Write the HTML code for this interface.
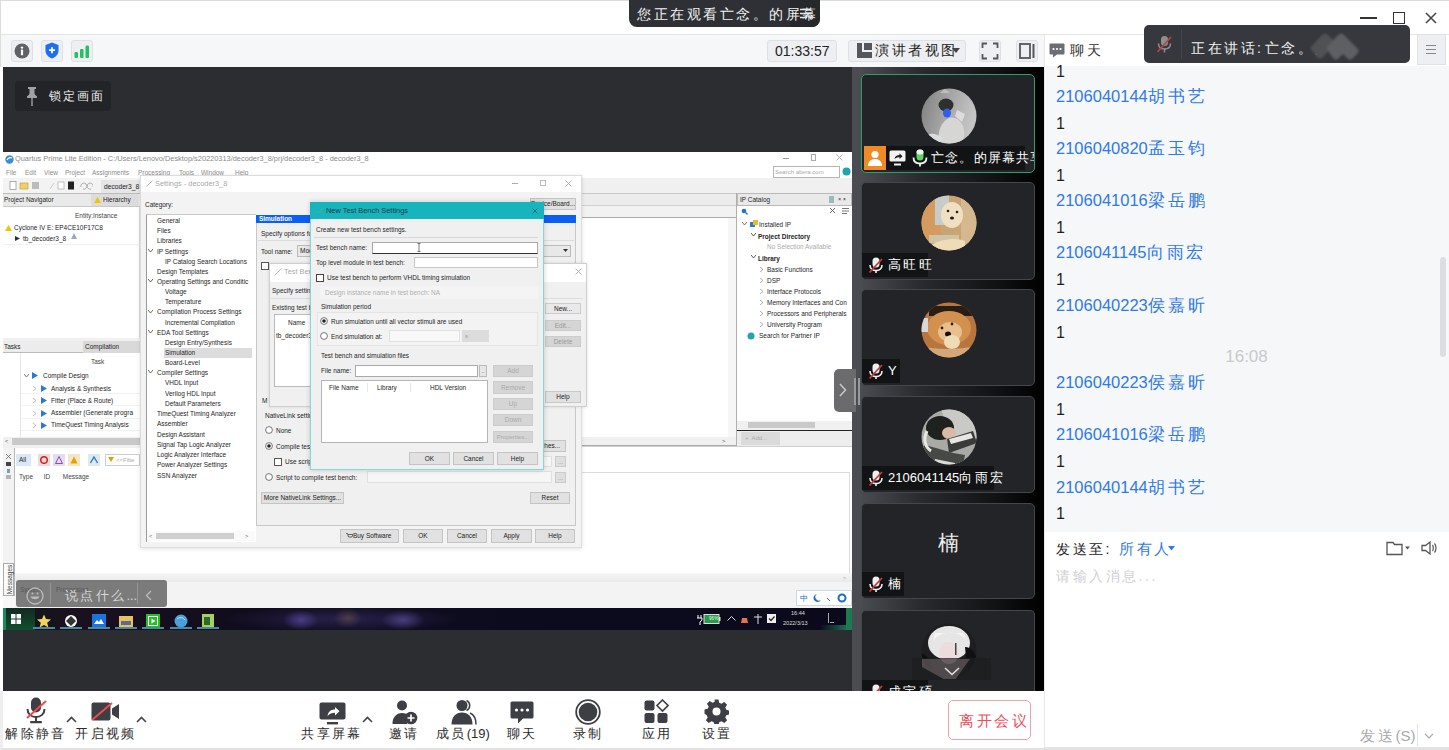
<!DOCTYPE html>
<html><head><meta charset="utf-8">
<style>
*{margin:0;padding:0;box-sizing:border-box}
html,body{width:1449px;height:750px;overflow:hidden;background:#fff;font-family:"Liberation Sans",sans-serif}
.a{position:absolute}
.cj{letter-spacing:.18em}
svg{display:block}
.qt{white-space:nowrap;font-family:"Liberation Sans",sans-serif}
#top{left:0;top:0;width:1449px;height:34px;background:#fff;border-top:1px solid #dcdcdc;border-left:1px solid #dcdcdc}
#tb{left:0;top:34px;width:1044px;height:33px;background:#f6f7f9;border-top:1px solid #e4e5e7;border-left:1px solid #dcdcdc}
#main{left:3px;top:67px;width:849px;height:624px;background:#2b2d31}
#strip{left:852px;top:67px;width:192px;height:624px;background:linear-gradient(90deg,#55565b 0,#4a4b50 5%,#2a2b2f 35%,#111214 75%,#000 100%)}
#bot{left:0;top:691px;width:1044px;height:59px;background:#fff;border-left:3px solid #eeeeee;border-bottom:2px solid #e2e2e2}
#chat{left:1044px;top:34px;width:405px;height:716px;background:#fff;border-top:1px solid #e4e5e7;border-left:1px solid #e8e8e8}
.ico{border:1px solid #dfe0e3;border-radius:3px;background:#eeeff2}
.card{left:861px;width:174px;background:#232427;border:1px solid #45464b;border-radius:5px;overflow:hidden}
.av{border-radius:50%;left:58px;top:12px;width:56px;height:56px}
.nm{left:0px;bottom:2px;height:24px;background:#121314;color:#fff;font-size:13px;line-height:24px;padding:0 6px 0 26px;white-space:nowrap}
.mic{left:6px;top:4px}
.msg{left:1056px;font-size:16px;color:#1f1f1f;white-space:nowrap}
.nmb{color:#2f7ae5}
.bt{font-size:13px;color:#2b2b2b;white-space:nowrap;text-align:center}
</style></head><body>
<!-- top bar -->
<div id="top" class="a"></div>
<div class="a" style="left:629px;top:0;width:191px;height:27px;background:#2e3035;border-radius:0 0 8px 8px"></div>
<div class="a" style="left:790px;top:0;width:30px;height:27px;background:#26282c;border-radius:0 0 8px 0"></div>
<div class="a cj" style="left:637px;top:6px;font-size:14px;line-height:16px;color:#f2f2f2;white-space:nowrap">您正在观看亡念。的屏幕</div>
<svg class="a" style="left:799px;top:8px" width="14" height="12" viewBox="0 0 14 12"><path d="M1 1.5h11M1 5.5h11M1 9.5h7" stroke="#e8e8e8" stroke-width="1.3"/><path d="M9.5 8.5h4l-2 3z" fill="#e8e8e8"/></svg>
<!-- window controls -->
<div class="a" style="left:1360px;top:17px;width:17px;height:2px;background:#333"></div>
<div class="a" style="left:1393px;top:12px;width:12px;height:12px;border:1.6px solid #333"></div>
<svg class="a" style="left:1425px;top:12px" width="12" height="12" viewBox="0 0 12 12"><path d="M1 1L11 11M11 1L1 11" stroke="#444" stroke-width="1.5"/></svg>

<!-- toolbar -->
<div id="tb" class="a"></div>
<div class="a ico" style="left:11px;top:40px;width:22px;height:22px"></div>
<svg class="a" style="left:14px;top:43px" width="16" height="16" viewBox="0 0 16 16"><circle cx="8" cy="8" r="7.5" fill="#5f6166"/><circle cx="8" cy="4.6" r="1.2" fill="#fff"/><rect x="6.9" y="6.6" width="2.2" height="5.6" fill="#fff"/></svg>
<div class="a ico" style="left:41px;top:40px;width:22px;height:22px"></div>
<svg class="a" style="left:45px;top:42px" width="14" height="17" viewBox="0 0 14 17"><path d="M7 0.5L13.5 3v5.5c0 4-3 6.8-6.5 8-3.5-1.2-6.5-4-6.5-8V3z" fill="#1d6ff2"/><path d="M7 5.2v6M4 8.2h6" stroke="#fff" stroke-width="1.8"/></svg>
<div class="a ico" style="left:71px;top:40px;width:22px;height:22px"></div>
<svg class="a" style="left:74px;top:45px" width="16" height="13" viewBox="0 0 16 13"><rect x="0.5" y="7" width="3.5" height="6" rx="1.2" fill="#23c163"/><rect x="6" y="4" width="3.5" height="9" rx="1.2" fill="#23c163"/><rect x="11.5" y="0.5" width="3.5" height="12.5" rx="1.2" fill="#23c163"/></svg>

<div class="a ico" style="left:767px;top:40px;width:70px;height:22px"></div>
<div class="a" style="left:775px;top:43px;font-size:14px;line-height:16px;color:#222">01:33:57</div>
<div class="a ico" style="left:848px;top:40px;width:118px;height:22px"></div>
<svg class="a" style="left:857px;top:43px" width="15" height="15" viewBox="0 0 15 15"><path d="M0 0h5v9h10v6H0z" fill="#55575c"/><rect x="7" y="0" width="8" height="7" fill="#55575c"/></svg>
<div class="a cj" style="left:875px;top:42px;font-size:14px;line-height:16px;color:#222;white-space:nowrap">演讲者视图</div>
<svg class="a" style="left:952px;top:48px" width="8" height="5" viewBox="0 0 8 5"><path d="M0 0h8L4 5z" fill="#444"/></svg>
<div class="a ico" style="left:979px;top:40px;width:22px;height:22px"></div>
<svg class="a" style="left:981px;top:42px" width="18" height="18" viewBox="0 0 18 18"><path d="M1.5 6V1.5H6M12 1.5h4.5V6M16.5 12v4.5H12M6 16.5H1.5V12" fill="none" stroke="#55575c" stroke-width="1.8"/></svg>
<div class="a ico" style="left:1016px;top:40px;width:22px;height:22px"></div>
<svg class="a" style="left:1019px;top:43px" width="17" height="16" viewBox="0 0 17 16"><rect x="1" y="1" width="10" height="14" fill="none" stroke="#55575c" stroke-width="1.8"/><rect x="13.5" y="1" width="2" height="14" fill="#55575c"/></svg>

<!-- main dark -->
<div id="main" class="a"></div>
<div class="a" style="left:15px;top:81px;width:96px;height:30px;background:#232428;border-radius:4px"></div>
<svg class="a" style="left:26px;top:87px" width="12" height="19" viewBox="0 0 12 19"><path d="M2 0h8v2H8.5v5L11 9.5V11H1V9.5L3.5 7V2H2z" fill="#a0a1a5"/><rect x="5.3" y="11" width="1.4" height="8" fill="#a0a1a5"/></svg>
<div class="a cj" style="left:49px;top:89px;font-size:12px;line-height:14px;color:#eee;white-space:nowrap">锁定画面</div>

<!-- SHARED SCREEN -->
<div class="a" style="left:3px;top:152px;width:849px;height:456px;background:#fff"></div>
<svg class="a" style="left:5px;top:155px" width="9" height="9" viewBox="0 0 9 9"><circle cx="4.5" cy="4.5" r="4.2" fill="#3a8fd0"/><path d="M2 5c1-2 3-3 5-2" stroke="#fff" stroke-width="1.2" fill="none"/></svg>
<div class="a qt" style="left:15px;top:154.3px;font-size:7.4px;line-height:10.4px;color:#8a8a8a;">Quartus Prime Lite Edition - C:/Users/Lenovo/Desktop/s20220313/decoder3_8/prj/decoder3_8 - decoder3_8</div>
<div class="a" style="left:783px;top:158px;width:6px;height:1px;background:#9a9a9a"></div>
<div class="a" style="left:811px;top:154px;width:5px;height:7px;border:1px solid #aaa"></div>
<svg class="a" style="left:836px;top:154px" width="7" height="7" viewBox="0 0 7 7"><path d="M0.5 0.5l6 6M6.5 0.5l-6 6" stroke="#aaa" stroke-width="0.9"/></svg>
<div class="a qt" style="left:6px;top:167.8px;font-size:6.48px;line-height:9.48px;color:#8c8c8c;">File</div>
<div class="a qt" style="left:25px;top:167.8px;font-size:6.48px;line-height:9.48px;color:#8c8c8c;">Edit</div>
<div class="a qt" style="left:44px;top:167.8px;font-size:6.48px;line-height:9.48px;color:#8c8c8c;">View</div>
<div class="a qt" style="left:65px;top:167.8px;font-size:6.48px;line-height:9.48px;color:#8c8c8c;">Project</div>
<div class="a qt" style="left:92px;top:167.8px;font-size:6.48px;line-height:9.48px;color:#8c8c8c;">Assignments</div>
<div class="a qt" style="left:138px;top:167.8px;font-size:6.48px;line-height:9.48px;color:#8c8c8c;">Processing</div>
<div class="a qt" style="left:179px;top:167.8px;font-size:6.48px;line-height:9.48px;color:#8c8c8c;">Tools</div>
<div class="a qt" style="left:201px;top:167.8px;font-size:6.48px;line-height:9.48px;color:#8c8c8c;">Window</div>
<div class="a qt" style="left:235px;top:167.8px;font-size:6.48px;line-height:9.48px;color:#8c8c8c;">Help</div>
<div class="a" style="left:773px;top:166px;width:67px;height:12px;background:#fff;border:1px solid #b5b5b5"></div>
<div class="a qt" style="left:775px;top:167.5px;font-size:6.01px;line-height:9.01px;color:#aaa;">Search altera.com</div>
<svg class="a" style="left:842px;top:167px" width="9" height="9" viewBox="0 0 9 9"><circle cx="4.5" cy="4.5" r="4" fill="#20a5b0"/></svg>
<div class="a" style="left:3px;top:178px;width:579px;height:15px;background:#f3f3f3"></div>
<div class="a" style="left:582px;top:178px;width:270px;height:15px;background:#f0f0f0"></div>
<svg class="a" style="left:8px;top:181px" width="85" height="10" viewBox="0 0 85 10"><rect x="2" y="0.5" width="6" height="8" fill="#fff" stroke="#999" stroke-width="0.8"/><rect x="12" y="2" width="8" height="6" fill="#f0d060" stroke="#b89a30" stroke-width="0.6"/><rect x="24" y="1" width="7" height="7" fill="#bbb"/><path d="M42 8l4-6" stroke="#ccc"/><rect x="50" y="1" width="6" height="7" fill="#fff" stroke="#aaa" stroke-width="0.7"/><rect x="60" y="0.5" width="6" height="8" fill="#222"/><path d="M73 6a3 3 0 1 1 2 2M85 6a3 3 0 1 0-2 2" stroke="#999" fill="none" stroke-width="0.8"/></svg>
<div class="a" style="left:101px;top:180px;width:39px;height:13px;background:#e6e6e6"></div>
<div class="a qt" style="left:104px;top:182.2px;font-size:6.66px;line-height:9.66px;color:#222;">decoder3_8</div>
<div class="a" style="left:3px;top:193px;width:137px;height:14px;background:#e9e9e9;border-top:1px solid #bdbdbd;border-bottom:1px solid #c8c8c8"></div>
<div class="a qt" style="left:4px;top:195.3px;font-size:6.48px;line-height:9.48px;color:#1e1e1e;">Project Navigator</div>
<div class="a" style="left:91px;top:194px;width:47px;height:12px;background:#dcdcdc"></div>
<svg class="a" style="left:94px;top:197px" width="7" height="6" viewBox="0 0 7 6"><path d="M3.5 0L7 6H0z" fill="#e8c800"/></svg>
<div class="a qt" style="left:103px;top:195.3px;font-size:6.48px;line-height:9.48px;color:#1e1e1e;">Hierarchy</div>
<div class="a" style="left:3px;top:207px;width:137px;height:131px;background:#fff;border-right:1px solid #ddd"></div>
<div class="a qt" style="left:75px;top:210.8px;font-size:6.48px;line-height:9.48px;color:#444;">Entity:Instance</div>
<svg class="a" style="left:5px;top:225px" width="7" height="6" viewBox="0 0 7 6"><path d="M3.5 0L7 6H0z" fill="#e8c800"/></svg>
<div class="a qt" style="left:14px;top:223.3px;font-size:6.48px;line-height:9.48px;color:#223;">Cyclone IV E: EP4CE10F17C8</div>
<svg class="a" style="left:15px;top:236px" width="5" height="5" viewBox="0 0 5 5"><path d="M0 0l5 2.5L0 5z" fill="#234"/></svg>
<div class="a qt" style="left:23px;top:234.3px;font-size:6.48px;line-height:9.48px;color:#1e1e1e;">tb_decoder3_8</div>
<svg class="a" style="left:71px;top:233px" width="6" height="6" viewBox="0 0 6 6"><path d="M3 0l3 6H0z" fill="#9ab" /></svg>
<div class="a" style="left:3px;top:244px;width:137px;height:1px;background:#f1f1f1"></div>
<div class="a" style="left:3px;top:338px;width:137px;height:3px;background:#f0f0f0"></div>
<div class="a" style="left:3px;top:341px;width:137px;height:12px;background:#ececec;border-bottom:1px solid #bbb"></div>
<div class="a qt" style="left:4px;top:342.3px;font-size:6.48px;line-height:9.48px;color:#1e1e1e;">Tasks</div>
<div class="a" style="left:83px;top:341px;width:57px;height:12px;background:#d9d9d9"></div>
<div class="a qt" style="left:85px;top:342.3px;font-size:6.48px;line-height:9.48px;color:#1e1e1e;">Compilation</div>
<div class="a" style="left:3px;top:353px;width:137px;height:85px;background:#fff"></div>
<div class="a" style="left:20px;top:353px;width:1px;height:85px;background:#e6e6e6"></div>
<div class="a qt" style="left:91px;top:357.3px;font-size:6.48px;line-height:9.48px;color:#444;">Task</div>
<svg class="a" style="left:24px;top:374px" width="5" height="4" viewBox="0 0 5 4"><path d="M0 0l2.5 3L5 0" stroke="#666" fill="none" stroke-width="0.9"/></svg>
<svg class="a" style="left:32px;top:372px" width="6" height="7" viewBox="0 0 6 7"><path d="M0 0l6 3.5L0 7z" fill="#2a7ad0"/></svg>
<div class="a qt" style="left:43px;top:371.3px;font-size:6.48px;line-height:9.48px;color:#1e1e1e;">Compile Design</div>
<svg class="a" style="left:33px;top:386.0px" width="3" height="5" viewBox="0 0 3 5"><path d="M0 0l3 2.5L0 5" stroke="#aaa" fill="none" stroke-width="0.8"/></svg>
<svg class="a" style="left:41px;top:385.0px" width="6" height="7" viewBox="0 0 6 7"><path d="M0 0l6 3.5L0 7z" fill="#2a7ad0"/></svg>
<div class="a qt" style="left:51px;top:383.8px;font-size:6.48px;line-height:9.48px;color:#1e1e1e;">Analysis &amp; Synthesis</div>
<div class="a" style="left:21px;top:393px;width:119px;height:1px;background:#f2f2f2"></div>
<svg class="a" style="left:33px;top:398.0px" width="3" height="5" viewBox="0 0 3 5"><path d="M0 0l3 2.5L0 5" stroke="#aaa" fill="none" stroke-width="0.8"/></svg>
<svg class="a" style="left:41px;top:397.0px" width="6" height="7" viewBox="0 0 6 7"><path d="M0 0l6 3.5L0 7z" fill="#2a7ad0"/></svg>
<div class="a qt" style="left:51px;top:395.8px;font-size:6.48px;line-height:9.48px;color:#1e1e1e;">Fitter (Place &amp; Route)</div>
<div class="a" style="left:21px;top:405px;width:119px;height:1px;background:#f2f2f2"></div>
<svg class="a" style="left:33px;top:410.5px" width="3" height="5" viewBox="0 0 3 5"><path d="M0 0l3 2.5L0 5" stroke="#aaa" fill="none" stroke-width="0.8"/></svg>
<svg class="a" style="left:41px;top:409.5px" width="6" height="7" viewBox="0 0 6 7"><path d="M0 0l6 3.5L0 7z" fill="#2a7ad0"/></svg>
<div class="a qt" style="left:51px;top:408.3px;font-size:6.48px;line-height:9.48px;color:#1e1e1e;">Assembler (Generate progra</div>
<div class="a" style="left:21px;top:418px;width:119px;height:1px;background:#f2f2f2"></div>
<svg class="a" style="left:33px;top:422.5px" width="3" height="5" viewBox="0 0 3 5"><path d="M0 0l3 2.5L0 5" stroke="#aaa" fill="none" stroke-width="0.8"/></svg>
<svg class="a" style="left:41px;top:421.5px" width="6" height="7" viewBox="0 0 6 7"><path d="M0 0l6 3.5L0 7z" fill="#2a7ad0"/></svg>
<div class="a qt" style="left:51px;top:420.3px;font-size:6.48px;line-height:9.48px;color:#1e1e1e;">TimeQuest Timing Analysis</div>
<div class="a" style="left:21px;top:430px;width:119px;height:1px;background:#f2f2f2"></div>
<div class="a" style="left:3px;top:437px;width:137px;height:9px;background:#f0f0f0"></div>
<div class="a" style="left:12px;top:438px;width:128px;height:7px;background:#c9c9c9"></div>
<div class="a qt" style="left:5px;top:437.2px;font-size:5.55px;line-height:8.55px;color:#555;">&lt;</div>
<div class="a" style="left:3px;top:446px;width:137px;height:2px;background:#f0f0f0"></div>
<div class="a" style="left:3px;top:448px;width:849px;height:130px;background:#fff"></div>
<div class="a" style="left:3px;top:448px;width:12px;height:148px;background:#f3f3f3;border-right:1px solid #b8b8b8"></div>
<svg class="a" style="left:4px;top:452px" width="9" height="28" viewBox="0 0 9 28"><path d="M2 2l5 5M7 2L2 7" stroke="#666" stroke-width="0.8"/><rect x="2" y="10" width="5" height="4" fill="#444"/><rect x="3" y="17" width="3" height="4" fill="#7a9ad0"/><path d="M2 24h5M2 26h5" stroke="#555" stroke-width="0.8"/></svg>
<div class="a" style="left:16px;top:454px;width:15px;height:12px;background:#d8e8f8"></div>
<div class="a qt" style="left:19px;top:455.3px;font-size:6.48px;line-height:9.48px;color:#1e1e1e;">All</div>
<div class="a" style="left:38px;top:454px;width:12px;height:12px;background:#f0d8d8"></div>
<svg class="a" style="left:40px;top:456px" width="8" height="8" viewBox="0 0 8 8"><circle cx="4" cy="4" r="3.3" fill="none" stroke="#d02020" stroke-width="1.5"/></svg>
<div class="a" style="left:53px;top:454px;width:12px;height:12px;background:#e6dcf0"></div>
<svg class="a" style="left:55px;top:456px" width="8" height="8" viewBox="0 0 8 8"><path d="M4 0.5L7.5 7.5H0.5z" fill="none" stroke="#8040b0" stroke-width="0.9"/></svg>
<div class="a" style="left:68px;top:454px;width:12px;height:12px;background:#f3e6c8"></div>
<svg class="a" style="left:70px;top:456px" width="8" height="8" viewBox="0 0 8 8"><path d="M4 0.5L7.5 7.5H0.5z" fill="#e8a000"/></svg>
<div class="a" style="left:88px;top:454px;width:12px;height:12px;background:#dfe8ee"></div>
<svg class="a" style="left:90px;top:456px" width="8" height="8" viewBox="0 0 8 8"><path d="M0.5 7L4 1l3.5 6" fill="none" stroke="#2080c0" stroke-width="1.3"/></svg>
<div class="a" style="left:105px;top:454px;width:35px;height:12px;background:#fff;border:1px solid #ccd"></div>
<svg class="a" style="left:108px;top:457px" width="6" height="5" viewBox="0 0 6 5"><path d="M0 0h6L3 5z" fill="#e0a000"/></svg>
<div class="a qt" style="left:116px;top:455.5px;font-size:6.01px;line-height:9.01px;color:#aaa;">&lt;&lt;Filte</div>
<div class="a qt" style="left:19px;top:472.3px;font-size:6.48px;line-height:9.48px;color:#444;">Type&nbsp;&nbsp;&nbsp;&nbsp;&nbsp; ID&nbsp;&nbsp;&nbsp;&nbsp;&nbsp;&nbsp; Message</div>
<div class="a" style="left:15px;top:573px;width:837px;height:9px;background:linear-gradient(#f6f6f6,#e9e9e9)"></div>
<div class="a" style="left:15px;top:582px;width:837px;height:26px;background:#f3f3f4"></div>
<div class="a" style="left:3px;top:596px;width:12px;height:12px;background:#f8f8f8"></div>
<div class="a" style="left:3px;top:563px;width:11px;height:33px;background:#fbfbfb;border:1px solid #aaa"></div>
<div class="a qt" style="left:-8px;top:575px;width:34px;height:9px;font-size:6.5px;line-height:9px;color:#444;text-align:center;transform:rotate(-90deg)">Messages</div>
<div class="a qt" style="left:20px;top:585.3px;font-size:6.48px;line-height:9.48px;color:#1e1e1e;">System</div>
<div class="a qt" style="left:56px;top:585.3px;font-size:6.48px;line-height:9.48px;color:#1e1e1e;">Processing</div>
<div class="a" style="left:796px;top:590px;width:56px;height:16px;background:#fff;border:1px solid #cfd8e0"></div>
<div class="a qt" style="left:800px;top:592.5px;font-size:8px;line-height:11px;color:#1b6fc0;letter-spacing:0">中</div>
<svg class="a" style="left:812px;top:593px" width="44" height="10" viewBox="0 0 44 10"><path d="M5 1a4 4 0 1 0 4 6 3 3 0 0 1-4-6z" fill="#1b6fc0"/><path d="M15 5l3 3" stroke="#1b6fc0" stroke-width="1"/><circle cx="30" cy="5" r="3.5" fill="none" stroke="#1b6fc0" stroke-width="2"/></svg>
<div class="a" style="left:582px;top:193px;width:155px;height:12px;background:#ececec;border-top:1px solid #c8c8c8"></div>
<div class="a" style="left:582px;top:205px;width:155px;height:13px;background:#f2f2f2;border-top:1px solid #cfcfcf;border-bottom:1px solid #aaa"></div>
<div class="a" style="left:582px;top:218px;width:154px;height:219px;background:#fff"></div>
<div class="a" style="left:728px;top:218px;width:8px;height:219px;background:#f6f6f6"></div>
<div class="a" style="left:582px;top:437px;width:154px;height:9px;background:#f0f0f0;border-bottom:1px solid #aaa"></div>
<div class="a qt" style="left:722px;top:436.7px;font-size:5.55px;line-height:8.55px;color:#555;">&gt;</div>
<div class="a" style="left:736px;top:193px;width:1px;height:253px;background:#b0b0b0"></div>
<div class="a" style="left:737px;top:193px;width:115px;height:13px;background:#e9e9e9;border:1px solid #b8b8b8"></div>
<div class="a qt" style="left:740px;top:194.8px;font-size:6.48px;line-height:9.48px;color:#1e1e1e;">IP Catalog</div>
<div class="a" style="left:829px;top:196px;width:5px;height:7px;background:#9bb"></div>
<div class="a qt" style="left:838px;top:195.2px;font-size:5.55px;line-height:8.55px;color:#333;">× ×</div>
<div class="a" style="left:737px;top:206px;width:115px;height:11px;background:#fff"></div>
<svg class="a" style="left:741px;top:208px" width="7" height="7" viewBox="0 0 7 7"><circle cx="3" cy="3" r="2.3" fill="#2070d0"/><path d="M4.5 4.5l2 2" stroke="#2070d0" stroke-width="1.2"/></svg>
<svg class="a" style="left:829px;top:207px" width="7" height="7" viewBox="0 0 7 7"><path d="M1 1l5 5M6 1L1 6" stroke="#666" stroke-width="1"/></svg>
<svg class="a" style="left:842px;top:207px" width="8" height="8" viewBox="0 0 8 8"><path d="M0 1.5h7M0 4h7M0 6.5h5" stroke="#555" stroke-width="0.8"/></svg>
<div class="a" style="left:737px;top:217px;width:115px;height:204px;background:#fff"></div>
<svg class="a" style="left:742px;top:222px" width="5" height="4" viewBox="0 0 5 4"><path d="M0 0l2.5 3L5 0" stroke="#666" fill="none" stroke-width="0.9"/></svg>
<svg class="a" style="left:750px;top:220px" width="8" height="8" viewBox="0 0 8 8"><rect x="0" y="2" width="5" height="5" fill="#2a7ad0"/><rect x="3" y="0" width="5" height="5" fill="#e0c030"/></svg>
<div class="a qt" style="left:759px;top:220.3px;font-size:6.48px;line-height:9.48px;color:#1e1e1e;">Installed IP</div>
<svg class="a" style="left:751px;top:233px" width="5" height="4" viewBox="0 0 5 4"><path d="M0 0l2.5 3L5 0" stroke="#444" fill="none" stroke-width="0.9"/></svg>
<div class="a qt" style="left:758px;top:231.8px;font-size:6.48px;line-height:9.48px;color:#222;"><b>Project Directory</b></div>
<div class="a qt" style="left:767px;top:242.3px;font-size:6.48px;line-height:9.48px;color:#aaa;">No Selection Available</div>
<svg class="a" style="left:751px;top:255px" width="5" height="4" viewBox="0 0 5 4"><path d="M0 0l2.5 3L5 0" stroke="#444" fill="none" stroke-width="0.9"/></svg>
<div class="a qt" style="left:758px;top:253.8px;font-size:6.48px;line-height:9.48px;color:#222;"><b>Library</b></div>
<svg class="a" style="left:760px;top:267.0px" width="3" height="5" viewBox="0 0 3 5"><path d="M0 0l3 2.5L0 5" stroke="#999" fill="none" stroke-width="0.8"/></svg>
<div class="a qt" style="left:767px;top:264.8px;font-size:6.48px;line-height:9.48px;color:#1e1e1e;">Basic Functions</div>
<svg class="a" style="left:760px;top:278.0px" width="3" height="5" viewBox="0 0 3 5"><path d="M0 0l3 2.5L0 5" stroke="#999" fill="none" stroke-width="0.8"/></svg>
<div class="a qt" style="left:767px;top:275.8px;font-size:6.48px;line-height:9.48px;color:#1e1e1e;">DSP</div>
<svg class="a" style="left:760px;top:289.0px" width="3" height="5" viewBox="0 0 3 5"><path d="M0 0l3 2.5L0 5" stroke="#999" fill="none" stroke-width="0.8"/></svg>
<div class="a qt" style="left:767px;top:286.8px;font-size:6.48px;line-height:9.48px;color:#1e1e1e;">Interface Protocols</div>
<svg class="a" style="left:760px;top:300.0px" width="3" height="5" viewBox="0 0 3 5"><path d="M0 0l3 2.5L0 5" stroke="#999" fill="none" stroke-width="0.8"/></svg>
<div class="a qt" style="left:767px;top:297.8px;font-size:6.48px;line-height:9.48px;color:#1e1e1e;">Memory Interfaces and Con</div>
<svg class="a" style="left:760px;top:311.0px" width="3" height="5" viewBox="0 0 3 5"><path d="M0 0l3 2.5L0 5" stroke="#999" fill="none" stroke-width="0.8"/></svg>
<div class="a qt" style="left:767px;top:308.8px;font-size:6.48px;line-height:9.48px;color:#1e1e1e;">Processors and Peripherals</div>
<svg class="a" style="left:760px;top:322.0px" width="3" height="5" viewBox="0 0 3 5"><path d="M0 0l3 2.5L0 5" stroke="#999" fill="none" stroke-width="0.8"/></svg>
<div class="a qt" style="left:767px;top:319.8px;font-size:6.48px;line-height:9.48px;color:#1e1e1e;">University Program</div>
<svg class="a" style="left:747px;top:332px" width="8" height="8" viewBox="0 0 8 8"><circle cx="4" cy="4" r="3.5" fill="#20a5b0"/></svg>
<div class="a qt" style="left:759px;top:331.3px;font-size:6.48px;line-height:9.48px;color:#1e1e1e;">Search for Partner IP</div>
<div class="a" style="left:737px;top:421px;width:115px;height:9px;background:#f0f0f0"></div>
<div class="a" style="left:748px;top:422px;width:67px;height:6px;background:#c9c9c9"></div>
<div class="a" style="left:737px;top:430px;width:115px;height:1px;background:#222"></div>
<div class="a" style="left:737px;top:431px;width:115px;height:15px;background:#ededed"></div>
<div class="a" style="left:741px;top:432px;width:39px;height:13px;background:#dadada"></div>
<div class="a qt" style="left:745px;top:434.0px;font-size:6.01px;line-height:9.01px;color:#aaa;">+&nbsp; Add...</div>
<div class="a" style="left:582px;top:446px;width:270px;height:1px;background:#d0d0d0"></div>
<div class="a" style="left:582px;top:472px;width:268px;height:1px;background:#dcdcdc"></div>
<div class="a" style="left:849px;top:472px;width:1px;height:101px;background:#dcdcdc"></div>
<div class="a qt" style="left:843px;top:573.7px;font-size:5.55px;line-height:8.55px;color:#aaa;">&gt;</div>
<div class="a" style="left:140px;top:175px;width:442px;height:373px;background:#f3f3f4;border:1px solid #dcdcdc;box-shadow:0 1px 4px rgba(0,0,0,.12)"></div>
<div class="a" style="left:141px;top:176px;width:440px;height:16px;background:#fff"></div>
<svg class="a" style="left:146px;top:180px" width="7" height="7" viewBox="0 0 7 7"><path d="M0.5 6.5l6-6" stroke="#bbb" stroke-width="1"/></svg>
<div class="a qt" style="left:155px;top:178.8px;font-size:7.4px;line-height:10.4px;color:#a8a8a8;">Settings - decoder3_8</div>
<div class="a" style="left:512px;top:183px;width:6px;height:1px;background:#aaa"></div>
<div class="a" style="left:540px;top:180px;width:6px;height:6px;border:1px solid #bbb"></div>
<svg class="a" style="left:565px;top:180px" width="7" height="7" viewBox="0 0 7 7"><path d="M0.5 0.5l6 6M6.5 0.5l-6 6" stroke="#aaa" stroke-width="0.9"/></svg>
<div class="a qt" style="left:145px;top:200.3px;font-size:6.48px;line-height:9.48px;color:#1e1e1e;">Category:</div>
<div class="a" style="left:146px;top:214px;width:110px;height:328px;background:#fff;border-left:1.5px solid #9a9a9a;border-top:1px solid #c8c8c8"></div>
<div class="a" style="left:164px;top:348px;width:88px;height:10px;background:#dcdcdc"></div>
<div class="a qt" style="left:157px;top:216.2px;font-size:6.48px;line-height:9.48px;color:#1e1e1e;">General</div>
<div class="a qt" style="left:157px;top:226.3px;font-size:6.48px;line-height:9.48px;color:#1e1e1e;">Files</div>
<div class="a qt" style="left:157px;top:236.3px;font-size:6.48px;line-height:9.48px;color:#1e1e1e;">Libraries</div>
<svg class="a" style="left:148px;top:248.9px" width="5" height="4" viewBox="0 0 5 4"><path d="M0 0l2.5 3L5 0" stroke="#555" fill="none" stroke-width="0.9"/></svg>
<div class="a qt" style="left:157px;top:246.7px;font-size:6.48px;line-height:9.48px;color:#1e1e1e;">IP Settings</div>
<div class="a qt" style="left:165px;top:256.7px;font-size:6.48px;line-height:9.48px;color:#1e1e1e;">IP Catalog Search Locations</div>
<div class="a qt" style="left:157px;top:266.8px;font-size:6.48px;line-height:9.48px;color:#1e1e1e;">Design Templates</div>
<svg class="a" style="left:148px;top:279.1px" width="5" height="4" viewBox="0 0 5 4"><path d="M0 0l2.5 3L5 0" stroke="#555" fill="none" stroke-width="0.9"/></svg>
<div class="a qt" style="left:157px;top:276.9px;font-size:6.48px;line-height:9.48px;color:#1e1e1e;">Operating Settings and Conditic</div>
<div class="a qt" style="left:165px;top:287.1px;font-size:6.48px;line-height:9.48px;color:#1e1e1e;">Voltage</div>
<div class="a qt" style="left:165px;top:297.3px;font-size:6.48px;line-height:9.48px;color:#1e1e1e;">Temperature</div>
<svg class="a" style="left:148px;top:309.5px" width="5" height="4" viewBox="0 0 5 4"><path d="M0 0l2.5 3L5 0" stroke="#555" fill="none" stroke-width="0.9"/></svg>
<div class="a qt" style="left:157px;top:307.3px;font-size:6.48px;line-height:9.48px;color:#1e1e1e;">Compilation Process Settings</div>
<div class="a qt" style="left:165px;top:317.7px;font-size:6.48px;line-height:9.48px;color:#1e1e1e;">Incremental Compilation</div>
<svg class="a" style="left:148px;top:330.1px" width="5" height="4" viewBox="0 0 5 4"><path d="M0 0l2.5 3L5 0" stroke="#555" fill="none" stroke-width="0.9"/></svg>
<div class="a qt" style="left:157px;top:327.9px;font-size:6.48px;line-height:9.48px;color:#1e1e1e;">EDA Tool Settings</div>
<div class="a qt" style="left:165px;top:337.9px;font-size:6.48px;line-height:9.48px;color:#1e1e1e;">Design Entry/Synthesis</div>
<div class="a qt" style="left:165px;top:347.9px;font-size:6.48px;line-height:9.48px;color:#1e1e1e;">Simulation</div>
<div class="a qt" style="left:165px;top:358.0px;font-size:6.48px;line-height:9.48px;color:#1e1e1e;">Board-Level</div>
<svg class="a" style="left:148px;top:370.3px" width="5" height="4" viewBox="0 0 5 4"><path d="M0 0l2.5 3L5 0" stroke="#555" fill="none" stroke-width="0.9"/></svg>
<div class="a qt" style="left:157px;top:368.1px;font-size:6.48px;line-height:9.48px;color:#1e1e1e;">Compiler Settings</div>
<div class="a qt" style="left:165px;top:378.3px;font-size:6.48px;line-height:9.48px;color:#1e1e1e;">VHDL Input</div>
<div class="a qt" style="left:165px;top:388.6px;font-size:6.48px;line-height:9.48px;color:#1e1e1e;">Verilog HDL Input</div>
<div class="a qt" style="left:165px;top:398.8px;font-size:6.48px;line-height:9.48px;color:#1e1e1e;">Default Parameters</div>
<div class="a qt" style="left:157px;top:409.1px;font-size:6.48px;line-height:9.48px;color:#1e1e1e;">TimeQuest Timing Analyzer</div>
<div class="a qt" style="left:157px;top:419.3px;font-size:6.48px;line-height:9.48px;color:#1e1e1e;">Assembler</div>
<div class="a qt" style="left:157px;top:429.6px;font-size:6.48px;line-height:9.48px;color:#1e1e1e;">Design Assistant</div>
<div class="a qt" style="left:157px;top:439.8px;font-size:6.48px;line-height:9.48px;color:#1e1e1e;">Signal Tap Logic Analyzer</div>
<div class="a qt" style="left:157px;top:450.0px;font-size:6.48px;line-height:9.48px;color:#1e1e1e;">Logic Analyzer Interface</div>
<div class="a qt" style="left:157px;top:460.3px;font-size:6.48px;line-height:9.48px;color:#1e1e1e;">Power Analyzer Settings</div>
<div class="a qt" style="left:157px;top:470.5px;font-size:6.48px;line-height:9.48px;color:#1e1e1e;">SSN Analyzer</div>
<div class="a" style="left:147px;top:531px;width:108px;height:10px;background:#fafafa"></div>
<div class="a" style="left:156px;top:533px;width:78px;height:6px;background:#cfcfcf"></div>
<div class="a qt" style="left:149px;top:531.7px;font-size:5.55px;line-height:8.55px;color:#666;">&lt;</div>
<div class="a qt" style="left:245px;top:531.7px;font-size:5.55px;line-height:8.55px;color:#666;">&gt;</div>
<div class="a" style="left:256px;top:215px;width:320px;height:8px;background:#0a5ff5"></div>
<div class="a qt" style="left:259px;top:214.3px;font-size:6.48px;line-height:9.48px;color:#fff;"><b>Simulation</b></div>
<div class="a" style="left:256px;top:223px;width:320px;height:303px;background:#f0f0f0;border:1px solid #c8c8c8;border-top:none"></div>
<div class="a qt" style="left:261px;top:228.8px;font-size:6.48px;line-height:9.48px;color:#1e1e1e;">Specify options for generating output files for use with other EDA tools.</div>
<div class="a" style="left:258px;top:240px;width:316px;height:1px;background:#dcdcdc"></div>
<div class="a qt" style="left:261px;top:246.8px;font-size:6.48px;line-height:9.48px;color:#1e1e1e;">Tool name:</div>
<div class="a" style="left:297px;top:245px;width:274px;height:12px;background:#e8e8e8;border:1px solid #bbb"></div>
<div class="a qt" style="left:300px;top:246.3px;font-size:6.48px;line-height:9.48px;color:#1e1e1e;">ModelSim-Altera</div>
<svg class="a" style="left:563px;top:249px" width="5" height="4" viewBox="0 0 5 4"><path d="M0 0h5L2.5 3z" fill="#333"/></svg>
<div class="a" style="left:261px;top:262px;width:8px;height:8px;background:#fff;border:1px solid #555"></div>
<div class="a qt" style="left:262px;top:396.3px;font-size:6.48px;line-height:9.48px;color:#1e1e1e;">M</div>
<div class="a qt" style="left:265px;top:411.0px;font-size:6.48px;line-height:9.48px;color:#1e1e1e;">NativeLink settings</div>
<svg class="a" style="left:265px;top:426px" width="8" height="8" viewBox="0 0 8 8"><circle cx="4" cy="4" r="3.4" fill="#fff" stroke="#555" stroke-width="0.8"/></svg>
<div class="a qt" style="left:276px;top:425.8px;font-size:6.48px;line-height:9.48px;color:#1e1e1e;">None</div>
<svg class="a" style="left:265px;top:442px" width="8" height="8" viewBox="0 0 8 8"><circle cx="4" cy="4" r="3.4" fill="#fff" stroke="#555" stroke-width="0.8"/><circle cx="4" cy="4" r="1.8" fill="#222"/></svg>
<div class="a qt" style="left:276px;top:441.8px;font-size:6.48px;line-height:9.48px;color:#1e1e1e;">Compile test bench:</div>
<div class="a" style="left:510px;top:440px;width:56px;height:12px;background:#e1e1e1;border:1px solid #c4c4c4"></div>
<div class="a qt" style="left:510px;width:56px;text-align:center;top:441.3px;font-size:6.48px;line-height:9.48px;color:#222;">Test Benches...</div>
<div class="a" style="left:274px;top:458px;width:8px;height:8px;background:#fff;border:1px solid #555"></div>
<div class="a qt" style="left:285px;top:457.3px;font-size:6.48px;line-height:9.48px;color:#1e1e1e;">Use script to set up simulation:</div>
<div class="a" style="left:367px;top:456px;width:185px;height:11px;background:#f6f6f6;border:1px solid #e0e0e0"></div>
<div class="a" style="left:555px;top:456px;width:11px;height:11px;background:#dedede;border:1px solid #ccc"></div>
<div class="a qt" style="left:555px;width:11px;text-align:center;top:456.8px;font-size:6.48px;line-height:9.48px;color:#999;">...</div>
<svg class="a" style="left:265px;top:473px" width="8" height="8" viewBox="0 0 8 8"><circle cx="4" cy="4" r="3.4" fill="#fff" stroke="#555" stroke-width="0.8"/></svg>
<div class="a qt" style="left:276px;top:472.8px;font-size:6.48px;line-height:9.48px;color:#1e1e1e;">Script to compile test bench:</div>
<div class="a" style="left:367px;top:471px;width:185px;height:12px;background:#f6f6f6;border:1px solid #e0e0e0"></div>
<div class="a" style="left:555px;top:472px;width:11px;height:11px;background:#dedede;border:1px solid #ccc"></div>
<div class="a qt" style="left:555px;width:11px;text-align:center;top:472.8px;font-size:6.48px;line-height:9.48px;color:#999;">...</div>
<div class="a" style="left:261px;top:492px;width:83px;height:12px;background:#e1e1e1;border:1px solid #c4c4c4"></div>
<div class="a qt" style="left:261px;width:83px;text-align:center;top:493.3px;font-size:6.48px;line-height:9.48px;color:#222;">More NativeLink Settings...</div>
<div class="a" style="left:530px;top:492px;width:40px;height:12px;background:#e1e1e1;border:1px solid #c4c4c4"></div>
<div class="a qt" style="left:530px;width:40px;text-align:center;top:493.3px;font-size:6.48px;line-height:9.48px;color:#222;">Reset</div>
<div class="a" style="left:340px;top:529px;width:59px;height:14px;background:#e1e1e1;border:1px solid #c4c4c4"></div>
<div class="a qt" style="left:340px;width:59px;text-align:center;top:531.3px;font-size:6.48px;line-height:9.48px;color:#222;">&nbsp;&nbsp; Buy Software</div>
<svg class="a" style="left:346px;top:533px" width="7" height="6" viewBox="0 0 7 6"><path d="M0 0.5h1.5l1 3.5h3.5l1-2.5H2" stroke="#444" fill="none" stroke-width="0.8"/></svg>
<div class="a" style="left:403px;top:529px;width:40px;height:14px;background:#e1e1e1;border:1px solid #c4c4c4"></div>
<div class="a qt" style="left:403px;width:40px;text-align:center;top:531.3px;font-size:6.48px;line-height:9.48px;color:#222;">OK</div>
<div class="a" style="left:447px;top:529px;width:40px;height:14px;background:#e1e1e1;border:1px solid #c4c4c4"></div>
<div class="a qt" style="left:447px;width:40px;text-align:center;top:531.3px;font-size:6.48px;line-height:9.48px;color:#222;">Cancel</div>
<div class="a" style="left:491px;top:529px;width:41px;height:14px;background:#e1e1e1;border:1px solid #c4c4c4"></div>
<div class="a qt" style="left:491px;width:41px;text-align:center;top:531.3px;font-size:6.48px;line-height:9.48px;color:#222;">Apply</div>
<div class="a" style="left:535px;top:529px;width:40px;height:14px;background:#e1e1e1;border:1px solid #c4c4c4"></div>
<div class="a qt" style="left:535px;width:40px;text-align:center;top:531.3px;font-size:6.48px;line-height:9.48px;color:#222;">Help</div>
<div class="a" style="left:530px;top:198px;width:46px;height:12px;background:#e1e1e1;border:1px solid #c4c4c4"></div>
<div class="a qt" style="left:530px;width:46px;text-align:center;top:199.3px;font-size:6.48px;line-height:9.48px;color:#222;">Device/Board...</div>
<div class="a" style="left:269px;top:263px;width:318px;height:144px;background:#f0f0f0;border:1px solid #cfcfcf;box-shadow:0 0 3px rgba(0,0,0,.12)"></div>
<div class="a" style="left:270px;top:264px;width:316px;height:18px;background:#fff"></div>
<svg class="a" style="left:274px;top:268px" width="8" height="8" viewBox="0 0 8 8"><path d="M0.5 7.5l7-7" stroke="#bbb" stroke-width="1"/></svg>
<div class="a qt" style="left:284px;top:267.3px;font-size:7.4px;line-height:10.4px;color:#aaa;">Test Bench</div>
<svg class="a" style="left:575px;top:268px" width="7" height="7" viewBox="0 0 7 7"><path d="M0.5 0.5l6 6M6.5 0.5l-6 6" stroke="#aaa" stroke-width="0.9"/></svg>
<div class="a qt" style="left:272px;top:285.8px;font-size:6.48px;line-height:9.48px;color:#1e1e1e;">Specify settings for each test bench.</div>
<div class="a" style="left:271px;top:298px;width:312px;height:1px;background:#dcdcdc"></div>
<div class="a qt" style="left:272px;top:302.8px;font-size:6.48px;line-height:9.48px;color:#1e1e1e;">Existing test bench settings:</div>
<div class="a" style="left:274px;top:314px;width:268px;height:73px;background:#fff;border:1px solid #bbb"></div>
<div class="a qt" style="left:288px;top:317.8px;font-size:6.48px;line-height:9.48px;color:#1e1e1e;">Name</div>
<div class="a qt" style="left:276px;top:330.8px;font-size:6.48px;line-height:9.48px;color:#1e1e1e;">tb_decoder3_8</div>
<div class="a" style="left:545px;top:303px;width:36px;height:11px;background:#e9e9e9;border:1px solid #ccc"></div>
<div class="a qt" style="left:545px;width:36px;text-align:center;top:303.8px;font-size:6.48px;line-height:9.48px;color:#222;">New...</div>
<div class="a" style="left:545px;top:320px;width:36px;height:11px;background:#d5d5d5;border:1px solid #ccc"></div>
<div class="a qt" style="left:545px;width:36px;text-align:center;top:320.8px;font-size:6.48px;line-height:9.48px;color:#999;">Edit...</div>
<div class="a" style="left:545px;top:336px;width:36px;height:11px;background:#d5d5d5;border:1px solid #ccc"></div>
<div class="a qt" style="left:545px;width:36px;text-align:center;top:336.8px;font-size:6.48px;line-height:9.48px;color:#999;">Delete</div>
<div class="a" style="left:545px;top:391px;width:36px;height:12px;background:#e1e1e1;border:1px solid #c8c8c8"></div>
<div class="a qt" style="left:545px;width:36px;text-align:center;top:392.3px;font-size:6.48px;line-height:9.48px;color:#222;">Help</div>
<div class="a" style="left:310px;top:202px;width:234px;height:268px;background:#f0f0f0;border:1px solid #7fd8de;box-shadow:0 0 5px rgba(0,0,0,.18)"></div>
<div class="a" style="left:310px;top:202px;width:234px;height:17px;background:#17b4bd"></div>
<svg class="a" style="left:317px;top:208px" width="6" height="6" viewBox="0 0 6 6"><path d="M0.5 3l2 2 3-4.5" stroke="#6a6" fill="none" stroke-width="1"/></svg>
<div class="a qt" style="left:326px;top:205.6px;font-size:7.4px;line-height:10.4px;color:#1d3a40;">New Test Bench Settings</div>
<svg class="a" style="left:532px;top:208px" width="6" height="6" viewBox="0 0 6 6"><path d="M0.5 0.5l5 5M5.5 0.5l-5 5" stroke="#1a6d72" stroke-width="0.9"/></svg>
<div class="a qt" style="left:316px;top:225.1px;font-size:6.48px;line-height:9.48px;color:#1e1e1e;">Create new test bench settings.</div>
<div class="a" style="left:314px;top:237px;width:224px;height:1px;background:#d8d8d8"></div>
<div class="a qt" style="left:316px;top:243.3px;font-size:6.48px;line-height:9.48px;color:#1e1e1e;">Test bench name:</div>
<div class="a" style="left:372px;top:242px;width:166px;height:12px;background:#fff;border:1px solid #aaa;border-bottom:1.5px solid #333"></div>
<svg class="a" style="left:417px;top:243px" width="4" height="9" viewBox="0 0 4 9"><path d="M2 0.5v8M0.5 0.5h3M0.5 8.5h3" stroke="#444" stroke-width="0.7"/></svg>
<div class="a qt" style="left:316px;top:258.3px;font-size:6.48px;line-height:9.48px;color:#1e1e1e;">Top level module in test bench:</div>
<div class="a" style="left:414px;top:257px;width:124px;height:11px;background:#fff;border:1px solid #c8c8c8"></div>
<div class="a" style="left:316px;top:274px;width:8px;height:8px;background:#fff;border:1px solid #444"></div>
<div class="a qt" style="left:327px;top:273.3px;font-size:6.48px;line-height:9.48px;color:#1e1e1e;">Use test bench to perform VHDL timing simulation</div>
<div class="a" style="left:320px;top:286px;width:218px;height:13px;background:#f4f4f4"></div>
<div class="a qt" style="left:325px;top:287.8px;font-size:6.48px;line-height:9.48px;color:#b0b0b0;">Design instance name in test bench: NA</div>
<div class="a qt" style="left:321px;top:301.6px;font-size:6.48px;line-height:9.48px;color:#1e1e1e;">Simulation period</div>
<div class="a" style="left:317px;top:312px;width:221px;height:34px;background:#f3f3f3;border:1px solid #e4e4e4"></div>
<svg class="a" style="left:320px;top:317px" width="8" height="8" viewBox="0 0 8 8"><circle cx="4" cy="4" r="3.4" fill="#fff" stroke="#555" stroke-width="0.8"/><circle cx="4" cy="4" r="1.8" fill="#222"/></svg>
<div class="a qt" style="left:331px;top:316.6px;font-size:6.48px;line-height:9.48px;color:#1e1e1e;">Run simulation until all vector stimuli are used</div>
<svg class="a" style="left:320px;top:332px" width="8" height="8" viewBox="0 0 8 8"><circle cx="4" cy="4" r="3.4" fill="#fff" stroke="#555" stroke-width="0.8"/></svg>
<div class="a qt" style="left:331px;top:331.6px;font-size:6.48px;line-height:9.48px;color:#1e1e1e;">End simulation at:</div>
<div class="a" style="left:389px;top:330px;width:71px;height:12px;background:#f8f8f8;border:1px solid #e2e2e2"></div>
<div class="a" style="left:462px;top:330px;width:27px;height:12px;background:#dcdcdc"></div>
<div class="a qt" style="left:465px;top:331.5px;font-size:6.01px;line-height:9.01px;color:#999;">s</div>
<div class="a qt" style="left:321px;top:350.6px;font-size:6.48px;line-height:9.48px;color:#1e1e1e;">Test bench and simulation files</div>
<div class="a qt" style="left:321px;top:366.1px;font-size:6.48px;line-height:9.48px;color:#1e1e1e;">File name:</div>
<div class="a" style="left:355px;top:365px;width:123px;height:12px;background:#fff;border:1px solid #aaa"></div>
<div class="a" style="left:479px;top:365px;width:8px;height:12px;background:#e6e6e6;border:1px solid #bbb"></div>
<div class="a qt" style="left:479px;width:8px;text-align:center;top:366.7px;font-size:5.55px;line-height:8.55px;color:#555;">..</div>
<div class="a" style="left:493px;top:365px;width:40px;height:12px;background:#d5d5d5;border:1px solid #ccc"></div>
<div class="a qt" style="left:493px;width:40px;text-align:center;top:366.3px;font-size:6.48px;line-height:9.48px;color:#aaa;">Add</div>
<div class="a" style="left:321px;top:380px;width:167px;height:63px;background:#fff;border:1px solid #b5b5b5"></div>
<div class="a qt" style="left:329px;top:382.9px;font-size:6.48px;line-height:9.48px;color:#1e1e1e;">File Name</div>
<div class="a qt" style="left:377px;top:382.9px;font-size:6.48px;line-height:9.48px;color:#1e1e1e;">Library</div>
<div class="a qt" style="left:430px;top:382.9px;font-size:6.48px;line-height:9.48px;color:#1e1e1e;">HDL Version</div>
<div class="a" style="left:367px;top:383px;width:1px;height:9px;background:#e6e6e6"></div>
<div class="a" style="left:410px;top:383px;width:1px;height:9px;background:#e6e6e6"></div>
<div class="a" style="left:493px;top:381px;width:40px;height:13px;background:#d5d5d5;border:1px solid #ccc"></div>
<div class="a qt" style="left:493px;width:40px;text-align:center;top:382.8px;font-size:6.48px;line-height:9.48px;color:#aaa;">Remove</div>
<div class="a" style="left:493px;top:398px;width:40px;height:12px;background:#d5d5d5;border:1px solid #ccc"></div>
<div class="a qt" style="left:493px;width:40px;text-align:center;top:399.3px;font-size:6.48px;line-height:9.48px;color:#aaa;">Up</div>
<div class="a" style="left:493px;top:414px;width:40px;height:12px;background:#d5d5d5;border:1px solid #ccc"></div>
<div class="a qt" style="left:493px;width:40px;text-align:center;top:415.3px;font-size:6.48px;line-height:9.48px;color:#aaa;">Down</div>
<div class="a" style="left:493px;top:431px;width:40px;height:12px;background:#d5d5d5;border:1px solid #ccc"></div>
<div class="a qt" style="left:493px;width:40px;text-align:center;top:432.5px;font-size:6.01px;line-height:9.01px;color:#aaa;">Properties...</div>
<div class="a" style="left:409px;top:452px;width:41px;height:13px;background:#e1e1e1;border:1px solid #c4c4c4"></div>
<div class="a qt" style="left:409px;width:41px;text-align:center;top:453.8px;font-size:6.48px;line-height:9.48px;color:#222;">OK</div>
<div class="a" style="left:453px;top:452px;width:41px;height:13px;background:#e1e1e1;border:1px solid #c4c4c4"></div>
<div class="a qt" style="left:453px;width:41px;text-align:center;top:453.8px;font-size:6.48px;line-height:9.48px;color:#222;">Cancel</div>
<div class="a" style="left:497px;top:452px;width:41px;height:13px;background:#e1e1e1;border:1px solid #c4c4c4"></div>
<div class="a qt" style="left:497px;width:41px;text-align:center;top:453.8px;font-size:6.48px;line-height:9.48px;color:#222;">Help</div>
<div class="a" style="left:3px;top:608px;width:849px;height:22px;background:radial-gradient(ellipse 18px 10px at 298px 12px,rgba(110,90,200,.55),transparent),radial-gradient(ellipse 22px 10px at 400px 12px,rgba(120,100,200,.5),transparent),radial-gradient(ellipse 14px 10px at 345px 10px,rgba(150,110,80,.35),transparent),radial-gradient(ellipse 120px 14px at 340px 11px,rgba(60,50,110,.55),transparent),linear-gradient(90deg,#0e1a16 0,#1a1020 8%,#100c1c 30%,#0c0b1e 60%,#0a0a1c 100%)"></div>
<div class="a" style="left:3px;top:608px;width:32px;height:22px;background:linear-gradient(180deg,#122a22,#10502f)"></div>
<div class="a" style="left:3px;top:608px;width:3px;height:22px;background:#1c8a5a"></div>
<svg class="a" style="left:11px;top:614px" width="10" height="10" viewBox="0 0 10 10"><rect x="0" y="0" width="4.5" height="4.5" fill="#fff"/><rect x="5.5" y="0" width="4.5" height="4.5" fill="#fff"/><rect x="0" y="5.5" width="4.5" height="4.5" fill="#fff"/><rect x="5.5" y="5.5" width="4.5" height="4.5" fill="#fff"/></svg>
<svg class="a" style="left:37px;top:614px" width="14" height="14" viewBox="0 0 14 14"><path d="M7 0.5l2 4.5 5 0.5-3.8 3.2 1.2 4.8L7 11l-4.4 2.5 1.2-4.8L0 5.5l5-0.5z" fill="#f2d45c"/></svg>
<div class="a" style="left:33px;top:627px;width:22px;height:1.5px;background:#4a8aa0"></div>
<svg class="a" style="left:64px;top:614px" width="14" height="14" viewBox="0 0 14 14"><circle cx="7" cy="7" r="6" fill="#fff"/><path d="M7 2l5 5-5 5-5-5z" fill="#333"/></svg>
<div class="a" style="left:60px;top:627px;width:22px;height:1.5px;background:#4a8aa0"></div>
<svg class="a" style="left:92px;top:614px" width="14" height="14" viewBox="0 0 14 14"><rect x="0" y="0" width="14" height="14" fill="#1875e0"/><path d="M2 10l3-4 2 2 2-3 3 5z" fill="#fff"/></svg>
<div class="a" style="left:88px;top:627px;width:22px;height:1.5px;background:#4a8aa0"></div>
<svg class="a" style="left:119px;top:614px" width="14" height="14" viewBox="0 0 14 14"><rect x="0" y="2" width="14" height="11" fill="#e8c35a"/><rect x="2" y="7" width="10" height="4" fill="#5a6a9a"/></svg>
<div class="a" style="left:115px;top:627px;width:22px;height:1.5px;background:#4a8aa0"></div>
<svg class="a" style="left:146px;top:614px" width="14" height="14" viewBox="0 0 14 14"><rect x="0" y="0" width="14" height="14" fill="#22c022"/><rect x="2.5" y="2.5" width="9" height="9" fill="none" stroke="#fff" stroke-width="1"/><path d="M5.5 4.5l4 2.5-4 2.5z" fill="#fff"/></svg>
<div class="a" style="left:142px;top:627px;width:22px;height:1.5px;background:#4a8aa0"></div>
<svg class="a" style="left:174px;top:614px" width="14" height="14" viewBox="0 0 14 14"><circle cx="7" cy="7" r="6.5" fill="#4aa0d8"/><path d="M3 5c2-2 6-2 8 1" stroke="#bde" fill="none"/></svg>
<div class="a" style="left:170px;top:627px;width:22px;height:1.5px;background:#4a8aa0"></div>
<svg class="a" style="left:201px;top:614px" width="14" height="14" viewBox="0 0 14 14"><rect x="1" y="0" width="12" height="14" fill="#a8d060"/><rect x="3" y="3" width="6" height="8" fill="#2a6a2a"/></svg>
<div class="a" style="left:197px;top:627px;width:22px;height:1.5px;background:#4a8aa0"></div>
<svg class="a" style="left:697px;top:613px" width="24" height="12" viewBox="0 0 24 12"><path d="M1 2v3M4 2v3M0 5h5v2l-2 2v3" stroke="#fff" stroke-width="1" fill="none"/><rect x="7" y="1.5" width="15" height="9" fill="#2d9a4a" stroke="#ddd" stroke-width="1"/><rect x="22" y="4" width="1.5" height="4" fill="#ddd"/></svg>
<div class="a qt" style="left:709px;top:614.7px;font-size:4.62px;line-height:7.62px;color:#dfd;">96%</div>
<svg class="a" style="left:727px;top:615px" width="9" height="6" viewBox="0 0 9 6"><path d="M0.5 5.5l4-4 4 4" stroke="#ddd" fill="none" stroke-width="1"/></svg>
<svg class="a" style="left:741px;top:614px" width="7" height="10" viewBox="0 0 7 10"><path d="M3.5 0v3M1 4h5l1 5H0z" fill="#e8704a"/></svg>
<svg class="a" style="left:754px;top:614px" width="8" height="10" viewBox="0 0 8 10"><path d="M4 0v10M0 3h8" stroke="#ddd" stroke-width="1"/></svg>
<svg class="a" style="left:767px;top:614px" width="9" height="9" viewBox="0 0 9 9"><rect x="0" y="0" width="9" height="9" fill="#eee"/><path d="M2 4.5l2 2 3.5-4" stroke="#222" fill="none" stroke-width="1.2"/></svg>
<div class="a qt" style="left:791px;top:609.2px;font-size:5.55px;line-height:8.55px;color:#ddd;">16:44</div>
<div class="a qt" style="left:783px;top:619.2px;font-size:5.55px;line-height:8.55px;color:#ddd;">2022/3/13</div>
<div class="a" style="left:828px;top:613px;width:1px;height:10px;background:#aaa"></div>
<div class="a" style="left:830px;top:622px;width:4px;height:1px;background:#aaa"></div>
<div class="a" style="left:820px;top:625px;width:32px;height:5px;background:linear-gradient(90deg,rgba(40,160,110,0),rgba(40,180,120,.7))"></div>
<div class="a" style="left:846px;top:608px;width:6px;height:22px;background:#1a7a50"></div>
<div class="a" style="left:16px;top:580px;width:151px;height:27px;background:rgba(96,96,98,.82);border-radius:3px"></div>
<svg class="a" style="left:26px;top:587px" width="18" height="18" viewBox="0 0 18 18"><circle cx="9" cy="9" r="8" fill="none" stroke="#bbb" stroke-width="1.3"/><path d="M4.5 9.5c1 3.5 8 3.5 9 0z" fill="#bbb"/><circle cx="6.5" cy="6.5" r="1" fill="#bbb"/><circle cx="11.5" cy="6.5" r="1" fill="#bbb"/></svg>
<div class="a" style="left:50px;top:583px;width:1px;height:21px;background:rgba(200,200,200,.35)"></div>
<div class="a qt" style="left:65px;top:588.0px;font-size:13px;line-height:16px;color:#d6d6d6;"><span class="cj">说点什么</span>...</div>
<div class="a" style="left:137px;top:583px;width:1px;height:21px;background:rgba(200,200,200,.35)"></div>
<svg class="a" style="left:145px;top:590px" width="7" height="11" viewBox="0 0 7 11"><path d="M6 1L1.5 5.5 6 10" stroke="#bbb" fill="none" stroke-width="1.3"/></svg>
<!-- END SHARED -->

<!-- strip -->
<div id="strip" class="a"></div>
<div class="a" style="left:852px;top:67px;width:11px;height:624px;background:#4b4c51"></div>
<div class="a" style="left:834px;top:369px;width:22px;height:43px;background:#6b6b6d;border-radius:5px 0 0 5px"></div>
<svg class="a" style="left:839px;top:383px" width="8" height="14" viewBox="0 0 8 14"><path d="M1 1l5.5 6L1 13" fill="none" stroke="#c9c9c9" stroke-width="1.5"/></svg>
<div class="a" style="left:854px;top:378px;width:1.5px;height:27px;background:#9a9a9c"></div>
<div class="a" style="left:858px;top:378px;width:1.5px;height:27px;background:#9a9a9c"></div>


<div class="a card" style="top:74px;height:99px;border:1.5px solid #2f9c6a">
 <svg class="a" style="left:59px;top:13px" width="56" height="56" viewBox="0 0 56 56"><defs><clipPath id="c1"><circle cx="28" cy="28" r="27.5"/></clipPath></defs><g clip-path="url(#c1)"><defs><linearGradient id="g1" x1="0" y1="0" x2="1" y2="0.3"><stop offset="0" stop-color="#7c7d7c"/><stop offset="0.5" stop-color="#a3a4a3"/><stop offset="1" stop-color="#c4c5c4"/></linearGradient></defs>
<rect width="56" height="56" fill="url(#g1)"/>
<ellipse cx="25" cy="17" rx="7.5" ry="6.5" fill="#2e302e"/><path d="M24 1l5 4h-10z" fill="#bdbebd"/>
<ellipse cx="26" cy="25" rx="4" ry="4.5" fill="#2d5fe8"/>
<path d="M18 56c-2-12 2-22 10-26 7-2 14 4 15 12 1 6-1 10-3 14z" fill="#d6d7d5"/>
<path d="M4 48c6-4 12-2 18 2l-6 8H2z" fill="#dcdcdc"/>
<path d="M36 22l8 4-3 8-7-6z" fill="#dcdcdc"/></g></svg>
 <div class="a" style="left:2px;top:71px;width:161px;height:24px;background:#121314"></div>
 <div class="a" style="left:2px;top:71px;width:22px;height:24px;background:#f08a24"></div>
 <svg class="a" style="left:5px;top:74px" width="16" height="18" viewBox="0 0 16 18"><circle cx="8" cy="5.5" r="3.6" fill="#fff"/><path d="M1 17c0-4.5 3-7 7-7s7 2.5 7 7z" fill="#fff"/></svg>
 <svg class="a" style="left:27px;top:75px" width="17" height="17" viewBox="0 0 17 17"><rect x="0.5" y="0.5" width="16" height="11" rx="1.5" fill="#f4f4f4"/><path d="M5.5 9c0.5-3 2.5-4 5-4V3.3l3 2.9-3 2.9V7.3c-2 0-3.5 0.5-5 1.7z" fill="#222"/><rect x="5" y="13.5" width="7" height="2" fill="#f4f4f4"/></svg>
 <svg class="a" style="left:50px;top:74px" width="16" height="18" viewBox="0 0 16 18"><rect x="4.5" y="0.5" width="7" height="11" rx="3.5" fill="#5bd35f"/><rect x="4.5" y="0.5" width="7" height="5" rx="3" fill="#f2f2f2"/><path d="M1.5 8.5c0 4 2.8 6 6.5 6s6.5-2 6.5-6" fill="none" stroke="#f0f0f0" stroke-width="1.8"/><rect x="7.1" y="14" width="1.8" height="3.5" fill="#f0f0f0"/></svg>
 <div class="a cj" style="left:69px;top:76px;font-size:13px;line-height:14px;color:#fff;white-space:nowrap;letter-spacing:1.2px">亡念。的屏幕共享</div>
</div>
<div class="a card" style="top:182px;height:98px">
 <svg class="a" style="left:59px;top:12px" width="56" height="56" viewBox="0 0 56 56"><defs><clipPath id="c2"><circle cx="28" cy="28" r="27.5"/></clipPath></defs><g clip-path="url(#c2)"><rect width="56" height="56" fill="#c9a574"/>
<rect x="0" y="0" width="20" height="56" fill="#d49a5e"/>
<rect x="14" y="0" width="14" height="30" fill="#c8ccc8"/>
<rect x="40" y="0" width="16" height="56" fill="#d6b88e"/>
<ellipse cx="31" cy="20" rx="11" ry="13" fill="#efe0c4"/>
<circle cx="27" cy="16" r="1.3" fill="#222"/><circle cx="36" cy="17" r="1.3" fill="#222"/><ellipse cx="31" cy="23" rx="2" ry="1.6" fill="#1a1a1a"/>
<path d="M8 40h30v8H8z" fill="#cfc4a8"/>
<path d="M10 50c10-6 25-8 34-4v10H10z" fill="#eedcb8"/></g></svg>
 <div class="a nm cj" style="top:70px;bottom:auto;width:66px"><svg class="a mic" width="16" height="17" viewBox="0 0 16 17"><rect x="4.5" y="0.5" width="7" height="10" rx="3.5" fill="#f0f0f0"/><path d="M2 8c0 3.5 2.7 5.5 6 5.5s6-2 6-5.5" fill="none" stroke="#f0f0f0" stroke-width="1.6"/><rect x="7.2" y="13" width="1.6" height="3" fill="#f0f0f0"/><path d="M1.5 15.5L14 2" stroke="#c93a3a" stroke-width="1.8"/></svg>高旺旺</div>
</div>
<div class="a card" style="top:289px;height:97px">
 <svg class="a" style="left:59px;top:12px" width="56" height="56" viewBox="0 0 56 56"><defs><clipPath id="c3"><circle cx="28" cy="28" r="27.5"/></clipPath></defs><g clip-path="url(#c3)"><rect width="56" height="56" fill="#b8763e"/>
<path d="M8 4h44v10H8z" fill="#2a1d16"/>
<ellipse cx="28" cy="26" rx="22" ry="17" fill="#d3914f"/>
<ellipse cx="29" cy="30" rx="12" ry="10" fill="#e7c08e"/>
<circle cx="21" cy="26" r="1.4" fill="#3a1a10"/><circle cx="31" cy="22" r="1.4" fill="#3a1a10"/>
<ellipse cx="27" cy="32" rx="3" ry="2.5" fill="#150e0a"/>
<ellipse cx="31" cy="40" rx="8" ry="7" fill="#f0dcb4"/>
<path d="M0 44c14 4 36 4 56 0v12H0z" fill="#d2a878"/>
<rect x="0" y="16" width="7" height="14" fill="#d8d8d8"/></g></svg>
 <div class="a nm" style="top:69px;bottom:auto;width:38px"><svg class="a mic" width="16" height="17" viewBox="0 0 16 17"><rect x="4.5" y="0.5" width="7" height="10" rx="3.5" fill="#f0f0f0"/><path d="M2 8c0 3.5 2.7 5.5 6 5.5s6-2 6-5.5" fill="none" stroke="#f0f0f0" stroke-width="1.6"/><rect x="7.2" y="13" width="1.6" height="3" fill="#f0f0f0"/><path d="M1.5 15.5L14 2" stroke="#c93a3a" stroke-width="1.8"/></svg>Y</div>
</div>
<div class="a card" style="top:396px;height:97px">
 <svg class="a" style="left:59px;top:12px" width="56" height="56" viewBox="0 0 56 56"><defs><clipPath id="c4"><circle cx="28" cy="28" r="27.5"/></clipPath></defs><g clip-path="url(#c4)"><rect width="56" height="56" fill="#a9aaa6"/>
<path d="M20 0h36v30H30z" fill="#c9cac6"/>
<ellipse cx="19" cy="19" rx="14" ry="12" fill="#1f211f"/>
<ellipse cx="28" cy="24" rx="7" ry="6" fill="#d9b9a8"/>
<path d="M26 30l26-8 4 12-28 10z" fill="#3a3c3a"/>
<path d="M28 30l22-6 2 5-22 6z" fill="#e6e6e2"/>
<path d="M4 36c10 2 24 8 40 10l-2 10H0V40z" fill="#474947"/>
<path d="M14 50l20 4v2H12z" fill="#dadad6"/>
<path d="M6 22c-4 8-2 16 4 20" stroke="#e8e8e4" stroke-width="3" fill="none"/></g></svg>
 <div class="a nm" style="top:69px;bottom:auto;width:132px"><svg class="a mic" width="16" height="17" viewBox="0 0 16 17"><rect x="4.5" y="0.5" width="7" height="10" rx="3.5" fill="#f0f0f0"/><path d="M2 8c0 3.5 2.7 5.5 6 5.5s6-2 6-5.5" fill="none" stroke="#f0f0f0" stroke-width="1.6"/><rect x="7.2" y="13" width="1.6" height="3" fill="#f0f0f0"/><path d="M1.5 15.5L14 2" stroke="#c93a3a" stroke-width="1.8"/></svg>2106041145<span class="cj">向雨宏</span></div>
</div>
<div class="a card" style="top:503px;height:96px">
 <div class="a cj" style="left:0;top:27px;width:172px;text-align:center;font-size:21px;line-height:24px;color:#eee;letter-spacing:0">楠</div>
 <div class="a nm cj" style="top:68px;bottom:auto;width:42px"><svg class="a mic" width="16" height="17" viewBox="0 0 16 17"><rect x="4.5" y="0.5" width="7" height="10" rx="3.5" fill="#f0f0f0"/><path d="M2 8c0 3.5 2.7 5.5 6 5.5s6-2 6-5.5" fill="none" stroke="#f0f0f0" stroke-width="1.6"/><rect x="7.2" y="13" width="1.6" height="3" fill="#f0f0f0"/><path d="M1.5 15.5L14 2" stroke="#c93a3a" stroke-width="1.8"/></svg>楠</div>
</div>
<div class="a card" style="top:610px;height:90px;border-bottom:none">
 <svg class="a" style="left:59px;top:12px" width="56" height="56" viewBox="0 0 56 56"><defs><clipPath id="c6"><circle cx="28" cy="28" r="27.5"/></clipPath></defs><g clip-path="url(#c6)"><rect width="56" height="56" fill="#1e1e20"/>
<ellipse cx="28" cy="20" rx="21" ry="17" fill="#e6e6e6"/>
<path d="M12 18c6-10 26-12 34 0l-4-8H14z" fill="#f5f5f5"/>
<ellipse cx="28" cy="30" rx="10" ry="11" fill="#ecdcde"/>
<path d="M0 30c6 2 10 8 12 16H0z" fill="#0e0e10"/><path d="M44 24c6 0 10 6 12 12v10H46z" fill="#101012"/>
<rect x="34" y="20" width="1.5" height="12" fill="#444"/></g></svg>
 <div class="a" style="left:50px;top:47px;width:79px;height:22px;background:rgba(30,30,32,.75)"></div><div class="a" style="left:60px;top:48px;width:48px;height:20px;background:rgba(120,110,112,.55);clip-path:polygon(0 0,100% 0,70% 100%,45% 100%,0 40%)"></div>
 <svg class="a" style="left:82px;top:56px" width="16" height="9" viewBox="0 0 16 9"><path d="M1 1l7 6.5L15 1" fill="none" stroke="#e0e0e0" stroke-width="1.6"/></svg>
 <div class="a nm cj" style="top:69px;bottom:auto;width:66px"><svg class="a mic" width="16" height="17" viewBox="0 0 16 17"><rect x="4.5" y="0.5" width="7" height="10" rx="3.5" fill="#f0f0f0"/><path d="M2 8c0 3.5 2.7 5.5 6 5.5s6-2 6-5.5" fill="none" stroke="#f0f0f0" stroke-width="1.6"/><rect x="7.2" y="13" width="1.6" height="3" fill="#f0f0f0"/><path d="M1.5 15.5L14 2" stroke="#c93a3a" stroke-width="1.8"/></svg>成宇硕</div>
</div>


<!-- chat panel -->
<div id="chat" class="a"></div>

<div class="a" style="left:1045px;top:66px;width:404px;height:466px;background:#f6f7f9"></div>

<svg class="a" style="left:1049px;top:43px" width="16" height="15" viewBox="0 0 16 15"><path d="M0.5 1.5a1 1 0 0 1 1-1h13a1 1 0 0 1 1 1v9a1 1 0 0 1-1 1H8l-4 3v-3H1.5a1 1 0 0 1-1-1z" fill="#6c6e73"/><circle cx="4.5" cy="6" r="1.1" fill="#fff"/><circle cx="8" cy="6" r="1.1" fill="#fff"/><circle cx="11.5" cy="6" r="1.1" fill="#fff"/></svg>
<div class="a cj" style="left:1070px;top:42px;font-size:14px;line-height:16px;color:#333;white-space:nowrap">聊天</div>
<div class="a" style="left:1417px;top:34px;width:29px;height:31px;background:#eeeff2;border:1px solid #e0e1e4"></div>
<svg class="a" style="left:1425px;top:44px" width="12" height="11" viewBox="0 0 12 11"><path d="M1 1.5h10M1 5.5h10M1 9.5h10" stroke="#888" stroke-width="1.2"/></svg>
<div class="a" style="left:1440px;top:257px;width:6px;height:100px;background:#dcdde0;border-radius:3px"></div>
<div class="a msg" style="top:62px;line-height:20px">1</div>
<div class="a msg nmb" style="top:86px;font-size:16.5px;line-height:20px">2106040144<span class="cj">胡书艺</span></div>
<div class="a msg" style="top:114px;line-height:20px">1</div>
<div class="a msg nmb" style="top:138px;font-size:16.5px;line-height:20px">2106040820<span class="cj">孟玉钧</span></div>
<div class="a msg" style="top:166px;line-height:20px">1</div>
<div class="a msg nmb" style="top:190px;font-size:16.5px;line-height:20px">2106041016<span class="cj">梁岳鹏</span></div>
<div class="a msg" style="top:218px;line-height:20px">1</div>
<div class="a msg nmb" style="top:242px;font-size:16.5px;line-height:20px">2106041145<span class="cj">向雨宏</span></div>
<div class="a msg" style="top:270px;line-height:20px">1</div>
<div class="a msg nmb" style="top:295px;font-size:16.5px;line-height:20px">2106040223<span class="cj">侯嘉昕</span></div>
<div class="a msg" style="top:323px;line-height:20px">1</div>
<div class="a msg nmb" style="top:372px;font-size:16.5px;line-height:20px">2106040223<span class="cj">侯嘉昕</span></div>
<div class="a msg" style="top:400px;line-height:20px">1</div>
<div class="a msg nmb" style="top:424px;font-size:16.5px;line-height:20px">2106041016<span class="cj">梁岳鹏</span></div>
<div class="a msg" style="top:452px;line-height:20px">1</div>
<div class="a msg nmb" style="top:477px;font-size:16.5px;line-height:20px">2106040144<span class="cj">胡书艺</span></div>
<div class="a msg" style="top:504px;line-height:20px">1</div>

<div class="a" style="left:1050px;top:347px;width:393px;text-align:center;font-size:17px;line-height:20px;color:#c8cacd">16:08</div>
<div class="a cj" style="left:1056px;top:541px;font-size:14px;line-height:16px;color:#222;white-space:nowrap">发送至:</div>
<div class="a cj" style="left:1119px;top:540px;font-size:15px;line-height:17px;color:#2f7ae5;white-space:nowrap">所有人</div>
<svg class="a" style="left:1168px;top:546px" width="7" height="5" viewBox="0 0 7 5"><path d="M0 0h7L3.5 4.5z" fill="#2f7ae5"/></svg>
<svg class="a" style="left:1386px;top:540px" width="25" height="16" viewBox="0 0 25 16"><path d="M1 2.5h6l1.5 2H16v10H1z" fill="none" stroke="#555" stroke-width="1.3"/><path d="M19 6.5h5l-2.5 3z" fill="#555"/></svg>
<svg class="a" style="left:1421px;top:540px" width="16" height="16" viewBox="0 0 16 16"><path d="M1 5.5h3.5L9 2v12L4.5 10.5H1z" fill="none" stroke="#555" stroke-width="1.3"/><path d="M11.5 5c1 1 1 5 0 6M13.5 3.5c2 2 2 7 0 9" fill="none" stroke="#555" stroke-width="1.2"/></svg>
<div class="a cj" style="left:1056px;top:568px;font-size:14px;line-height:16px;color:#cfd0d3;white-space:nowrap">请输入消息...</div>
<div class="a" style="left:1360px;top:727px;font-size:15px;line-height:17px;color:#a8a9ac;white-space:nowrap"><span class="cj">发送</span>(S)</div>
<div class="a" style="left:1417px;top:724px;width:1px;height:22px;background:#e2e2e2"></div>
<svg class="a" style="left:1424px;top:733px" width="10" height="6" viewBox="0 0 10 6"><path d="M1 1l4 4 4-4" fill="none" stroke="#aaa" stroke-width="1.2"/></svg>
<div class="a" style="left:1044px;top:747px;width:405px;height:3px;background:#e2e2e2"></div>
<!-- speaking overlay -->
<div class="a" style="left:1144px;top:25px;width:266px;height:38px;background:#36383d;border-radius:5px"></div>
<div class="a" style="left:1181px;top:29px;width:1px;height:30px;background:#44464b"></div>
<svg class="a" style="left:1155px;top:35px" width="18" height="19" viewBox="0 0 18 19"><rect x="6" y="1" width="7" height="10" rx="3.5" fill="#8e8f92"/><path d="M3.5 8.5c0 3.5 2.5 5.5 6 5.5s6-2 6-5.5" fill="none" stroke="#8e8f92" stroke-width="1.5"/><rect x="8.8" y="13.5" width="1.5" height="4" fill="#8e8f92"/><path d="M2.5 17L16 2" stroke="#b8433f" stroke-width="1.8"/></svg>
<div class="a" style="left:1191px;top:40px;font-size:14px;line-height:16px;color:#f0f0f0;white-space:nowrap"><span class="cj">正在讲话</span>: <span class="cj">亡念。</span>;</div>
<svg class="a" style="left:1306px;top:30px;filter:blur(1.2px)" width="58" height="30" viewBox="0 0 58 30"><path d="M4 18L16 5c2-2 4-2 6 0l8 8-13 14c-2 2-4 2-6 0z" fill="#505155"/><path d="M20 18L32 5c2-2 4-2 6 0l13 13c2 2 2 4 0 6l-4 4c-2 2-4 2-6 0l-4-4-4 4c-2 2-4 2-6 0z" fill="#5e5f63"/></svg>



<!-- bottom bar -->
<div id="bot" class="a"></div>

<svg class="a" style="left:25px;top:697px" width="22" height="27" viewBox="0 0 22 27"><rect x="6" y="0.5" width="10" height="15" rx="5" fill="#3d3f44"/><path d="M2.5 12c0 5 3.8 8 8.5 8s8.5-3 8.5-8" fill="none" stroke="#3d3f44" stroke-width="2"/><rect x="10" y="19.5" width="2" height="5" fill="#3d3f44"/><rect x="5" y="24" width="12" height="2.2" rx="1" fill="#3d3f44"/><path d="M2 21L21 4" stroke="#ee4b4b" stroke-width="2"/></svg>
<div class="a bt cj" style="left:0px;top:726px;width:72px;line-height:15px">解除静音</div>
<svg class="a" style="left:66px;top:716px" width="11" height="7" viewBox="0 0 11 7"><path d="M1 6l4.5-4.5L10 6" fill="none" stroke="#444" stroke-width="1.6"/></svg>
<svg class="a" style="left:91px;top:702px" width="29" height="19" viewBox="0 0 29 19"><rect x="0.5" y="0.5" width="19" height="18" rx="2" fill="#3d3f44"/><path d="M21 6.5l7-4.5v15l-7-4.5z" fill="#3d3f44"/><path d="M1 18L21 1" stroke="#ee4b4b" stroke-width="2"/></svg>
<div class="a bt cj" style="left:70px;top:726px;width:72px;line-height:15px">开启视频</div>
<svg class="a" style="left:136px;top:716px" width="11" height="7" viewBox="0 0 11 7"><path d="M1 6l4.5-4.5L10 6" fill="none" stroke="#444" stroke-width="1.6"/></svg>

<svg class="a" style="left:319px;top:702px" width="27" height="23" viewBox="0 0 27 23"><rect x="0.5" y="0.5" width="26" height="17" rx="2" fill="#3d3f44"/><path d="M8.5 14c0.7-4.5 3.5-6.5 7.5-6.5V5l4.5 4.2L16 13.4v-2.6c-3 0-5.3 1-7.5 3.2z" fill="#fff"/><rect x="8" y="20" width="11" height="2.4" fill="#3d3f44"/></svg>
<div class="a bt cj" style="left:296px;top:726px;width:72px;line-height:15px">共享屏幕</div>
<svg class="a" style="left:362px;top:716px" width="11" height="7" viewBox="0 0 11 7"><path d="M1 6l4.5-4.5L10 6" fill="none" stroke="#444" stroke-width="1.6"/></svg>
<svg class="a" style="left:392px;top:700px" width="26" height="25" viewBox="0 0 26 25"><circle cx="10" cy="5.5" r="5" fill="#3d3f44"/><path d="M0.5 24c0-7 4-11 9.5-11 3 0 5 1 6.5 2.5a7 7 0 0 0-1 8.5z" fill="#3d3f44"/><circle cx="19" cy="18" r="6.3" fill="#3d3f44"/><path d="M19 14.5v7M15.5 18h7" stroke="#fff" stroke-width="1.7"/></svg>
<div class="a bt cj" style="left:368px;top:726px;width:72px;line-height:15px">邀请</div>
<svg class="a" style="left:451px;top:699px" width="26" height="26" viewBox="0 0 26 26"><circle cx="11" cy="6.5" r="5.5" fill="#3d3f44"/><path d="M15.5 1.5a5.5 5.5 0 0 1 0 10" fill="none" stroke="#3d3f44" stroke-width="1.5"/><path d="M0.5 25.5c0-8 4.5-12 10.5-12s10.5 4 10.5 12z" fill="#3d3f44"/><path d="M19 14c3.5 1.5 6 5 6 11.5" fill="none" stroke="#3d3f44" stroke-width="1.5"/></svg>
<div class="a bt" style="left:427px;top:726px;width:72px;line-height:15px"><span class="cj">成员</span>(19)</div>
<svg class="a" style="left:510px;top:701px" width="24" height="23" viewBox="0 0 24 23"><path d="M0.5 2a1.5 1.5 0 0 1 1.5-1.5h20A1.5 1.5 0 0 1 23.5 2v14A1.5 1.5 0 0 1 22 17.5H13l-5 5v-5H2A1.5 1.5 0 0 1 0.5 16z" fill="#3d3f44"/><circle cx="6.5" cy="9" r="1.6" fill="#fff"/><circle cx="12" cy="9" r="1.6" fill="#fff"/><circle cx="17.5" cy="9" r="1.6" fill="#fff"/></svg>
<div class="a bt cj" style="left:486px;top:726px;width:72px;line-height:15px">聊天</div>
<svg class="a" style="left:575px;top:699px" width="26" height="26" viewBox="0 0 26 26"><circle cx="13" cy="13" r="11.8" fill="none" stroke="#3d3f44" stroke-width="1.8"/><circle cx="13" cy="13" r="9.3" fill="#3d3f44"/></svg>
<div class="a bt cj" style="left:552px;top:726px;width:72px;line-height:15px">录制</div>
<svg class="a" style="left:644px;top:699px" width="25" height="25" viewBox="0 0 25 25"><rect x="0.5" y="1.5" width="10" height="10" rx="2" fill="#3d3f44"/><path d="M18.5 1l5.5 5.5-5.5 5.5-5.5-5.5z" fill="none" stroke="#3d3f44" stroke-width="1.6"/><rect x="0.5" y="14" width="10" height="10" rx="2" fill="#3d3f44"/><rect x="13.5" y="14" width="10" height="10" rx="2" fill="#3d3f44"/></svg>
<div class="a bt cj" style="left:621px;top:726px;width:72px;line-height:15px">应用</div>
<svg class="a" style="left:704px;top:699px" width="25" height="25" viewBox="0 0 25 25"><path d="M10.5 0.5h4l0.7 3.2 2.3 1 2.8-1.8 2.8 2.8-1.8 2.8 1 2.3 3.2 0.7v4l-3.2 0.7-1 2.3 1.8 2.8-2.8 2.8-2.8-1.8-2.3 1-0.7 3.2h-4l-0.7-3.2-2.3-1-2.8 1.8-2.8-2.8 1.8-2.8-1-2.3L0.5 14.5v-4l3.2-0.7 1-2.3-1.8-2.8 2.8-2.8 2.8 1.8 2.3-1z" fill="#3d3f44"/><circle cx="12.5" cy="12.5" r="4" fill="#fff"/></svg>
<div class="a bt cj" style="left:681px;top:726px;width:72px;line-height:15px">设置</div>
<div class="a" style="left:948px;top:700px;width:83px;height:40px;border:1.5px solid #f1a0a8;border-radius:5px"></div>
<div class="a cj" style="left:959px;top:712px;font-size:15px;line-height:17px;color:#ea4e5b;white-space:nowrap">离开会议</div>

</body></html>
